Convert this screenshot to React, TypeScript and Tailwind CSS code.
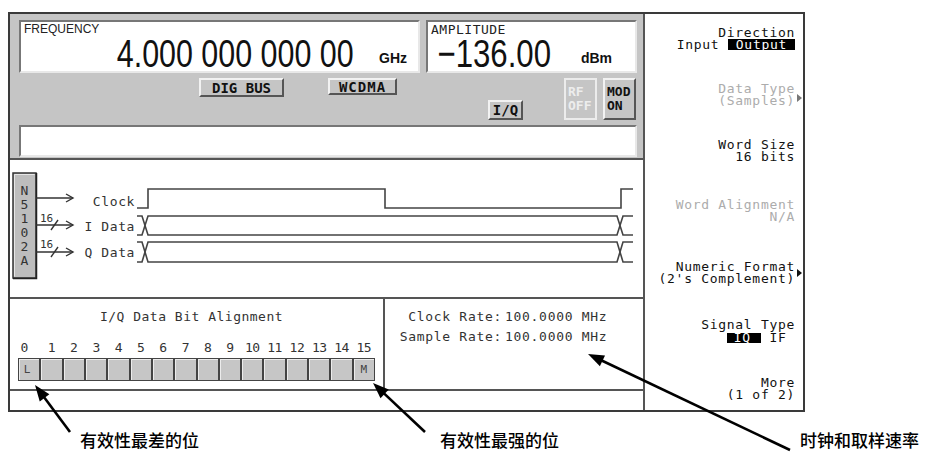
import React from "react";

const mono = "font-['DejaVu_Sans_Mono',monospace]";

function ArrowLine({ x1, y1, x2, y2 }: { x1: number; y1: number; x2: number; y2: number }) {
  const dx = x2 - x1;
  const dy = y2 - y1;
  const len = Math.hypot(dx, dy);
  const ux = dx / len;
  const uy = dy / len;
  const L = 16;
  const W = 6;
  const bx = x2 - ux * L;
  const by = y2 - uy * L;
  const px = -uy;
  const py = ux;
  return (
    <g>
      <line x1={x1} y1={y1} x2={bx + ux * 2} y2={by + uy * 2} stroke="#000" strokeWidth={2.6} />
      <polygon
        points={`${x2},${y2} ${bx + px * W},${by + py * W} ${bx - px * W},${by - py * W}`}
        fill="#000"
      />
    </g>
  );
}

function Btn({ className, children }: { className: string; children: React.ReactNode }) {
  return (
    <div
      className={`flex items-center justify-center border-2 border-t-[#f2f2f2] border-l-[#f2f2f2] border-b-[#555] border-r-[#555] bg-[#c5c5c5] ${mono} font-bold text-[#111] ${className}`}
    >
      {children}
    </div>
  );
}

function Header() {
  return (
    <div className="h-[146px] shrink-0 border-b-2 border-[#555] bg-[#c5c5c5] pl-[9px] pt-[6px]">
      <div className="flex h-[53px] gap-[6px]">
        <div className="flex w-[401px] flex-col border-2 border-t-[#777] border-l-[#777] border-r-[#e8e8e8] border-b-[#e8e8e8] bg-white">
          <div className="pl-[3px] pt-[1px] font-['Liberation_Sans',sans-serif] text-[12px] leading-[13px] text-[#222]">
            FREQUENCY
          </div>
          <div className="flex items-end justify-end pr-[11px]">
            <span className="block origin-right scale-x-[0.78] whitespace-pre font-['Liberation_Sans',sans-serif] text-[39px] leading-[36px] text-[#111]">
              4.000 000 000 00
            </span>
            <span className="mb-[7px] ml-[25px] font-['Liberation_Sans',sans-serif] text-[14px] font-bold leading-[14px] text-[#111]">
              GHz
            </span>
          </div>
        </div>
        <div className="flex w-[211px] flex-col border-2 border-t-[#777] border-l-[#777] border-r-[#e8e8e8] border-b-[#e8e8e8] bg-white">
          <div className={`pl-[3px] pt-[1px] ${mono} text-[13px] leading-[13px] tracking-[0.5px] text-[#222]`}>
            AMPLITUDE
          </div>
          <div className="flex items-end justify-end pr-[23px]">
            <span className="block origin-right scale-x-[0.8] whitespace-pre font-['Liberation_Sans',sans-serif] text-[39px] leading-[36px] text-[#111]">
              −136.00
            </span>
            <span className="mb-[7px] ml-[30px] font-['Liberation_Sans',sans-serif] text-[14px] font-bold leading-[14px] text-[#111]">
              dBm
            </span>
          </div>
        </div>
      </div>
      <div className="mt-[5px] flex h-[42px] items-start">
        <Btn className="ml-[180px] h-[19px] w-[85px] text-[14px] leading-[14px]">DIG BUS</Btn>
        <Btn className="ml-[44px] h-[17px] w-[69px] text-[14px] leading-[14px] tracking-[1px]">WCDMA</Btn>
        <Btn className="ml-[91px] mt-[22px] h-[20px] w-[35px] text-[14px] leading-[14px]">I/Q</Btn>
        <div
          className={`ml-[41px] flex h-[42px] w-[33px] flex-col items-start justify-center border-2 border-[#ececec] bg-[#c5c5c5] pl-[2px] ${mono} text-[13px] font-bold leading-[14px] text-[#ededed]`}
        >
          <span>RF</span>
          <span>OFF</span>
        </div>
        <Btn className="ml-[6px] h-[42px] w-[33px] !items-start flex-col pl-[2px] text-[13px] leading-[14px]">
          <span>MOD</span>
          <span>ON</span>
        </Btn>
      </div>
      <div className="mt-[5px] h-[32px] w-[618px] border-2 border-t-[#777] border-l-[#777] border-r-[#e8e8e8] border-b-[#e8e8e8] bg-white" />
    </div>
  );
}

function Bus({ t, b }: { t: number; b: number }) {
  return (
    <g>
      <path d={`M137,${t} H142 L148,${b} H617 L623,${t} H633`} fill="none" stroke="#444" strokeWidth={1.6} />
      <path d={`M137,${b} H142 L148,${t} H617 L623,${b} H633`} fill="none" stroke="#444" strokeWidth={1.6} />
    </g>
  );
}

function Diagram() {
  const letters = ["N", "5", "1", "0", "2", "A"];
  return (
    <div className="h-[139px] shrink-0 border-b-2 border-[#555] bg-white">
      <svg width={633} height={137} viewBox="10 160 633 137" className="block">
        <rect x={13} y={173} width={23} height={105} fill="#bdbdbd" stroke="#333" strokeWidth={1.5} />
        <path d="M14.5,276.5 V174.5 H34.5" fill="none" stroke="#e6e6e6" strokeWidth={1} />
        <path d="M36.5,173 V278.5 H13" fill="none" stroke="#222" strokeWidth={1.5} />
        {letters.map((l, i) => (
          <text
            key={i}
            x={24.5}
            y={195 + i * 14}
            textAnchor="middle"
            fontFamily="DejaVu Sans Mono, monospace"
            fontSize={13}
            fill="#333"
          >
            {l}
          </text>
        ))}
        <g stroke="#333" strokeWidth={1.4} fill="none">
          <path d="M36,198 H73" />
          <path d="M66,194 L73,198 L66,202" />
          <path d="M36,225 H73" />
          <path d="M66,221 L73,225 L66,229" />
          <path d="M51,230 L58,220" />
          <path d="M36,252 H73" />
          <path d="M66,248 L73,252 L66,256" />
          <path d="M51,257 L58,247" />
        </g>
        <g fontFamily="DejaVu Sans Mono, monospace" fontSize={11} fill="#333">
          <text x={40} y={222}>16</text>
          <text x={40} y={248}>16</text>
        </g>
        <g fontFamily="DejaVu Sans Mono, monospace" fontSize={13} fill="#333" textAnchor="end" letterSpacing={0.6}>
          <text x={135} y={206}>Clock</text>
          <text x={135} y={231}>I Data</text>
          <text x={135} y={257}>Q Data</text>
        </g>
        <path d="M137,208 H148 V189 H385 V208 H621 V189 H633" fill="none" stroke="#444" strokeWidth={1.6} />
        <Bus t={216} b={235} />
        <Bus t={242} b={262} />
      </svg>
    </div>
  );
}

function BottomPanel() {
  const nums = Array.from({ length: 16 }, (_, i) => i);
  return (
    <div className={`flex h-[92px] shrink-0 border-b-2 border-[#555] bg-white ${mono} text-[13px] leading-[12px] text-[#333]`}>
      <div className="w-[375px] border-r-2 border-[#555] pt-[12px]">
        <div className="pr-[10px] text-center tracking-[0.5px]">I/Q Data Bit Alignment</div>
        <div className="ml-[8px] mt-[19px] grid w-[357px] grid-cols-16 text-center tracking-[-0.5px]">
          {nums.map((n) => (
            <span key={n} className={n === 0 ? "pr-[10px]" : ""}>
              {n}
            </span>
          ))}
        </div>
        <div className="ml-[8px] mt-[4px] grid h-[23px] w-[357px] grid-cols-16">
          {nums.map((n) => (
            <div
              key={n}
              className={`flex items-center justify-center border border-[#444] bg-[#c6c6c6] text-[11px] text-[#444] shadow-[inset_1px_1px_0_#ececec] ${n === 0 ? "pr-[4px]" : ""}`}
            >
              {n === 0 ? "L" : n === 15 ? "M" : ""}
            </div>
          ))}
        </div>
      </div>
      <div className="flex-1 pl-[9px] pt-[12px] tracking-[0.7px]">
        <div className="grid grid-cols-[108px_1fr] gap-y-[8px]">
          <span className="text-right">Clock Rate:</span>
          <span className="pl-[3px]">100.0000 MHz</span>
          <span className="text-right">Sample Rate:</span>
          <span className="pl-[3px]">100.0000 MHz</span>
        </div>
      </div>
    </div>
  );
}

function Tri({ color, top }: { color: string; top: string }) {
  return (
    <span
      className={`absolute right-[-7px] h-0 w-0 border-y-[4px] border-l-[5px] border-y-transparent ${color} ${top}`}
    />
  );
}

function Softkeys() {
  return (
    <div
      className={`flex flex-1 flex-col bg-white pr-[8px] pt-[13px] text-right ${mono} text-[13px] leading-[12px] tracking-[0.7px] text-[#111]`}
    >
      <div className="h-[56px] shrink-0">
        <div>Direction</div>
        <div>
          Input{"\u00a0"}
          <span className="inline-block bg-black px-[8px] leading-[11px] text-white">Output</span>
        </div>
      </div>
      <div className="relative h-[56px] shrink-0 text-[#acacac]">
        <div>Data Type</div>
        <div>(Samples)</div>
        <Tri color="border-l-[#777]" top="top-[11px]" />
      </div>
      <div className="h-[60px] shrink-0">
        <div>Word Size</div>
        <div>16 bits</div>
      </div>
      <div className="h-[62px] shrink-0 text-[#acacac]">
        <div>Word Alignment</div>
        <div>N/A</div>
      </div>
      <div className="relative h-[58px] shrink-0">
        <div>Numeric Format</div>
        <div>(2's Complement)</div>
        <Tri color="border-l-[#111]" top="top-[8px]" />
      </div>
      <div className="h-[58px] shrink-0">
        <div>Signal Type</div>
        <div className="mt-[1px]">
          <span className="inline-block bg-black pl-[7px] pr-[10px] leading-[10px] text-white">IQ</span>
          {"\u00a0"}IF{"\u00a0"}
        </div>
      </div>
      <div className="shrink-0">
        <div>More</div>
        <div>(1 of 2)</div>
      </div>
    </div>
  );
}

export default function App() {
  return (
    <div className="relative h-[461px] w-[948px] overflow-hidden bg-white text-[#222]">
      <div className="ml-[8px] mt-[12px] flex h-[400px] w-[797px] border-2 border-[#3a3a3a]">
        <div className="flex w-[635px] shrink-0 flex-col border-r-2 border-[#555]">
          <Header />
          <Diagram />
          <BottomPanel />
          <div className="flex-1 bg-white" />
        </div>
        <Softkeys />
      </div>
      <div className="mt-[18px] flex font-['Noto_Sans_CJK_SC',sans-serif] text-[17px] font-medium leading-[20px] text-black">
        <span className="ml-[80px]">有效性最差的位</span>
        <span className="ml-[241px]">有效性最强的位</span>
        <span className="ml-[241px]">时钟和取样速率</span>
      </div>
      <svg className="pointer-events-none absolute left-0 top-0" width={948} height={461}>
        <ArrowLine x1={70} y1={432} x2={35} y2={385} />
        <ArrowLine x1={425} y1={432} x2={373} y2={383} />
        <ArrowLine x1={790} y1={450} x2={588} y2={354} />
      </svg>
    </div>
  );
}
